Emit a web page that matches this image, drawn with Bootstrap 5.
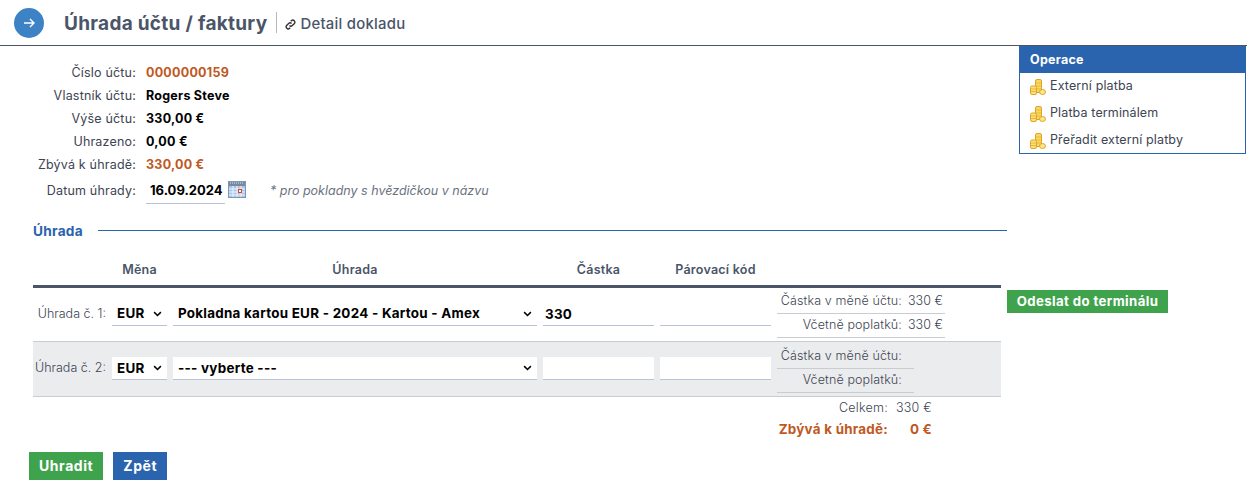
<!DOCTYPE html>
<html lang="cs">

<head>
  <meta charset="UTF-8">
  <meta name="viewport" content="width=device-width, initial-scale=1.0">
  <title>Úhrada účtu / faktury</title>
  <link href="https://cdn.jsdelivr.net/npm/bootstrap@5.3.3/dist/css/bootstrap.min.css" rel="stylesheet">
  <script src="https://cdn.jsdelivr.net/npm/bootstrap@5.3.3/dist/js/bootstrap.bundle.min.js"></script>
  <style>
    body { font-family: Inter, "Liberation Sans", sans-serif; font-size: 12.5px; color: #3d4452; background: #fff; letter-spacing: .02em; }

    /* hlavička */
    .hlavicka { height: 46px; border-bottom: 1px solid #4a5568; padding-left: 14px; }
    .kruh { width: 30px; height: 30px; border-radius: 50%; background: #3d82c4; }
    .nadpis { font-size: 19px; font-weight: 700; color: #4a5568; margin: 4px 0 0 20px; letter-spacing: .015em; }
    .detail-odkaz { margin-left: 9px; padding: 3px 0 0 8px; border-left: 1px solid #b5b9c0; height: 21px; font-size: 14.9px; font-weight: 500; color: #4a5568; text-decoration: none; }

    /* údaje o účtu */
    .udaje { padding: 16px 0 0 0; }
    .udaje-radek { height: 23px; }
    .popisek { width: 136px; text-align: right; margin-right: 10px; letter-spacing: .015em; white-space: nowrap; }
    .hodnota { font-weight: 700; color: #000; }
    .oranzova { color: #c0591f; }
    .datum-radek { margin-top: 2px; }
    .datum { width: 79px; border-bottom: 1px solid #b8c2d8; padding: 2px 0 2px 4px; font-weight: 700; font-size: 13px; color: #000; letter-spacing: 0; }
    .kalendar { margin: 0 0 4px 3px; }
    .poznamka { font-style: italic; color: #6b7280; margin-left: 24px; letter-spacing: 0; }

    /* panel operace */
    .operace { width: 227px; margin-right: 1px; border: 1px solid #2a64ae; border-top: 0; height: 108px; }
    .operace-titulek { background: #2a64ae; color: #fff; font-weight: 700; height: 27px; padding: 1px 0 0 10px; }
    .operace-polozka { height: 27px; padding-left: 10px; color: #3d4452; text-decoration: none; gap: 4px; letter-spacing: .01em; }

    /* úhrada */
    .sekce-titulek { margin: 17px 0 0 33px; width: 974px; color: #2a64ae; font-weight: 700; font-size: 13.7px; gap: 15px; }
    .sekce-cara { flex: 1; height: 1px; background: #2a64ae; }
    .uhrady { width: 968px; margin: 0 0 0 33px; table-layout: fixed; border-collapse: collapse; }
    .sl-popis { width: 79px; }
    .sl-mena { width: 61px; }
    .sl-uhrada { width: 370px; }
    .sl-castka { width: 117px; }
    .uhrady th { height: 45px; padding: 16px 6px 0 0; text-align: center; font-weight: 600; color: #4a5568; border-bottom: 3px solid #4a5568; }
    .uhrady td { padding: 0 6px 0 0; vertical-align: middle; }
    .uhrady .radek-platby td { border-bottom: 1px solid #c9ccd1; height: 55px; }
    .radek-seda td { background: #ebecee; }
    .pole-platby { border: 0; border-bottom: 1px solid #b8c2d8; border-radius: 0; font-size: 13.4px; font-weight: 700; color: #000; height: 23px; padding: 0 2px; min-height: 0; background-color: transparent; letter-spacing: .02em; }
    select.pole-platby { padding: 0 20px 0 5px; background-image: url("data:image/svg+xml,%3csvg xmlns='http://www.w3.org/2000/svg' viewBox='0 0 12 8'%3e%3cpath fill='none' stroke='%23000' stroke-width='2' d='M1.5 1.5 6 6l4.5-4.5'/%3e%3c/svg%3e"); background-position: right 5px center; background-size: 9px 6px; }
    .radek-seda .pole-platby { background-color: #fff; }
    .pole-platby:focus { box-shadow: none; }
    .uhrady td.popis-uhrady { text-align: right; font-weight: 300; letter-spacing: 0; }
    .uhrady td.souhrn { padding: 0; }
    .souhrn-radek { height: 24px; border-bottom: 1px solid #c9ccd1; width: 168px; }
    .souhrn-radek.uzky { width: 137px; }
    .souhrn-popis { width: 125px; text-align: right; margin-right: 6px; flex: none; font-weight: 300; letter-spacing: .01em; white-space: nowrap; }
    .souhrn-hodnota { font-weight: 300; letter-spacing: 0; }
    .celkem-radek { height: 21px; }
    .celkem-prvni { margin-top: 1px; font-weight: 300; }
    .celkem-druhy { font-size: 13.4px; height: 20px; }
    .celkem-popis { width: 888px; flex: none; text-align: right; }
    .celkem-hodnota { width: 44px; flex: none; text-align: right; }
    .tl-zelene, .tl-modre { border-radius: 0; border: 0; color: #fff; font-weight: 700; font-size: 14px; height: 28px; padding: 0 10px; letter-spacing: .04em; }
    .tl-zelene { background: #3fa34d; }
    .tl-modre { background: #2a64ae; }
    .tl-zelene:hover { background: #3fa34d; color: #fff; }
    .tl-modre:hover { background: #2a64ae; color: #fff; }
    .tl-terminal { height: 23px; width: 161px; padding: 0; margin: 49px 0 0 6px; font-size: 13.2px; letter-spacing: .03em; }
    .tlacitka { margin: 13px 0 0 29px; gap: 10px; }
  </style>
</head>

<body>
  <header class="hlavicka d-flex align-items-center">
    <span class="kruh d-flex align-items-center justify-content-center">
      <svg width="14" height="14" viewBox="0 0 14 14" fill="none" stroke="#fff" stroke-width="1.4"><path d="M2 7h10M8 3l4 4-4 4"/></svg>
    </span>
    <h1 class="nadpis">Úhrada účtu / faktury</h1>
    <a href="#" class="detail-odkaz d-flex align-items-center gap-1">
      <svg width="11" height="11" viewBox="0 0 16 16" fill="none" stroke="#333" stroke-width="2"><path d="M6.5 9.5a3 3 0 0 0 4.2 0l3-3a3 3 0 0 0-4.2-4.2L8.4 3.4"/><path d="M9.5 6.5a3 3 0 0 0-4.2 0l-3 3a3 3 0 0 0 4.2 4.2l1.1-1.1"/></svg>
      Detail dokladu
    </a>
  </header>

  <main>
    <div class="d-flex justify-content-between">
      <div class="udaje">
        <div class="udaje-radek d-flex align-items-center"><span class="popisek">Číslo účtu:</span><span class="hodnota oranzova">0000000159</span></div>
        <div class="udaje-radek d-flex align-items-center"><span class="popisek">Vlastník účtu:</span><span class="hodnota">Rogers Steve</span></div>
        <div class="udaje-radek d-flex align-items-center"><span class="popisek">Výše účtu:</span><span class="hodnota">330,00 €</span></div>
        <div class="udaje-radek d-flex align-items-center"><span class="popisek">Uhrazeno:</span><span class="hodnota">0,00 €</span></div>
        <div class="udaje-radek d-flex align-items-center"><span class="popisek">Zbývá k úhradě:</span><span class="hodnota oranzova">330,00 €</span></div>
        <div class="datum-radek d-flex align-items-center">
          <span class="popisek">Datum úhrady:</span>
          <span class="datum">16.09.2024</span>
          <svg class="kalendar" width="18" height="17" viewBox="0 0 18 17">
            <rect x=".5" y=".5" width="17" height="16" fill="#a9c6e8" stroke="#7f97b3"/>
            <rect x="1" y="1" width="16" height="4" fill="#76899f"/>
            <path d="M2 2h14" stroke="#dfe5ec" stroke-dasharray="1 1"/>
            <path d="M1 8h16M1 11h16M1 14h16M5 5v11M9 5v11M13 5v11" stroke="#eef4fb"/>
            <rect x="10.5" y="8.5" width="3" height="3" fill="#fff" stroke="#d8452e"/>
          </svg>
          <span class="poznamka">* pro pokladny s hvězdičkou v názvu</span>
        </div>
      </div>

      <aside class="operace">
        <div class="operace-titulek d-flex align-items-center">Operace</div>
        <a href="#" class="operace-polozka d-flex align-items-center">
          <svg width="16" height="16" viewBox="0 0 16 16"><use href="#mince"/></svg>Externí platba
        </a>
        <a href="#" class="operace-polozka d-flex align-items-center">
          <svg width="16" height="16" viewBox="0 0 16 16"><use href="#mince"/></svg>Platba terminálem
        </a>
        <a href="#" class="operace-polozka d-flex align-items-center">
          <svg width="16" height="16" viewBox="0 0 16 16"><use href="#mince"/></svg>Přeřadit externí platby
        </a>
      </aside>
    </div>

    <div class="sekce-titulek d-flex align-items-center">Úhrada <span class="sekce-cara"></span></div>

    <div class="d-flex align-items-start">
      <table class="uhrady">
        <colgroup>
          <col class="sl-popis"><col class="sl-mena"><col class="sl-uhrada"><col class="sl-castka"><col class="sl-castka"><col>
        </colgroup>
        <thead>
          <tr><th></th><th>Měna</th><th>Úhrada</th><th>Částka</th><th>Párovací kód</th><th></th></tr>
        </thead>
        <tbody>
          <tr class="radek-platby">
            <td class="popis-uhrady">Úhrada č. 1:</td>
            <td><select class="form-select pole-platby"><option>EUR</option></select></td>
            <td><select class="form-select pole-platby"><option>Pokladna kartou EUR - 2024 - Kartou - Amex</option></select></td>
            <td><input class="form-control pole-platby" value="330"></td>
            <td><input class="form-control pole-platby"></td>
            <td class="souhrn">
              <div class="souhrn-radek d-flex align-items-center"><span class="souhrn-popis">Částka v měně účtu:</span><span class="souhrn-hodnota">330 €</span></div>
              <div class="souhrn-radek d-flex align-items-center"><span class="souhrn-popis">Včetně poplatků:</span><span class="souhrn-hodnota">330 €</span></div>
            </td>
          </tr>
          <tr class="radek-platby radek-seda">
            <td class="popis-uhrady">Úhrada č. 2:</td>
            <td><select class="form-select pole-platby"><option>EUR</option></select></td>
            <td><select class="form-select pole-platby"><option>--- vyberte ---</option></select></td>
            <td><input class="form-control pole-platby"></td>
            <td><input class="form-control pole-platby"></td>
            <td class="souhrn">
              <div class="souhrn-radek uzky d-flex align-items-center"><span class="souhrn-popis">Částka v měně účtu:</span></div>
              <div class="souhrn-radek uzky d-flex align-items-center"><span class="souhrn-popis">Včetně poplatků:</span></div>
            </td>
          </tr>
        </tbody>
      </table>
      <button class="btn tl-zelene tl-terminal">Odeslat do terminálu</button>
    </div>

    <div>
      <div class="celkem-radek celkem-prvni d-flex align-items-center"><span class="celkem-popis">Celkem:</span><span class="celkem-hodnota">330 €</span></div>
      <div class="celkem-radek celkem-druhy d-flex align-items-center fw-bold oranzova"><span class="celkem-popis">Zbývá k úhradě:</span><span class="celkem-hodnota">0 €</span></div>
    </div>

    <div class="tlacitka d-flex">
      <button class="btn tl-zelene">Uhradit</button>
      <button class="btn tl-modre">Zpět</button>
    </div>
  </main>

  <svg width="0" height="0" class="position-absolute">
    <defs>
      <g id="mince">
        <rect x="5.5" y=".5" width="6" height="13" rx="1.5" fill="#f9d85e" stroke="#dfa52a"/>
        <path d="M6 4h5M6 7h5M6 10h5" stroke="#eab93a"/>
        <rect x=".5" y="7" width="6" height="8.5" rx="1.5" fill="#fbe07a" stroke="#dfa52a"/>
        <path d="M1 10h5M1 12.5h5" stroke="#eab93a"/>
        <ellipse cx="12.5" cy="13" rx="3" ry="2.5" fill="#fce68a" stroke="#dfa52a"/>
      </g>
    </defs>
  </svg>
</body>

</html>
